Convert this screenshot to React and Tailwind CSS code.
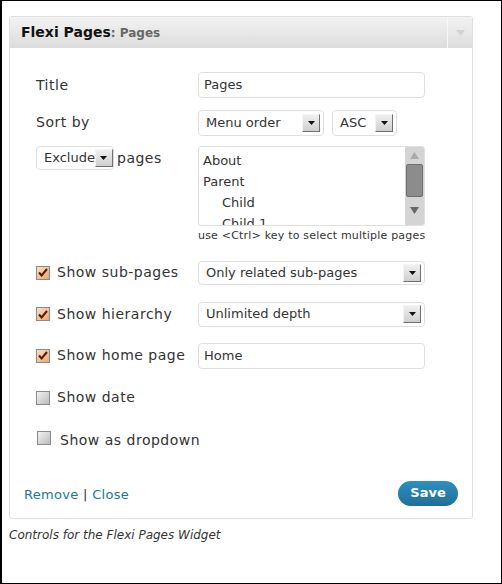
import React from "react"

const font = { fontFamily: '"DejaVu Sans", Verdana, sans-serif' }

function Arrow() {
  return (
    <span className="flex h-[18px] w-[18px] shrink-0 items-center justify-center border border-t-[#f4f4f4] border-l-[#f4f4f4] border-r-[#707070] border-b-[#707070] bg-gradient-to-b from-[#f0f0f0] to-[#cfcfcf]">
      <svg width="7" height="4" viewBox="0 0 7 4">
        <path d="M0 0h7L3.5 4z" fill="#111" />
      </svg>
    </span>
  )
}

function Select({ value, className = "" }) {
  return (
    <div className={`flex items-center justify-between rounded-[4px] border border-[#dfdfdf] bg-white pl-[7px] pr-[3px] text-[13px] text-[#333] ${className}`}>
      <span>{value}</span>
      <Arrow />
    </div>
  )
}

function Checkbox({ checked }) {
  return checked ? (
    <span className="flex h-[14px] w-[14px] shrink-0 items-center justify-center border border-[#8a8a8a] bg-gradient-to-br from-[#fbe0c6] to-[#e9a672]">
      <svg width="10" height="9" viewBox="0 0 10 9">
        <path d="M1 4.5l2.6 3L9 1" stroke="#5a1a05" strokeWidth="2" fill="none" />
      </svg>
    </span>
  ) : (
    <span className="block h-[14px] w-[14px] shrink-0 border border-[#8a8a8a] bg-gradient-to-br from-[#f2f2f2] to-[#bdbdbd]" />
  )
}

export default function App() {
  const pages = [
    { name: "About", indent: false },
    { name: "Parent", indent: false },
    { name: "Child", indent: true },
    { name: "Child 1", indent: true },
  ]

  return (
    <div className="h-[584px] w-[502px] overflow-hidden border border-l-2 border-black bg-white" style={font}>
      <div className="ml-[7px] mt-[15px] w-[464px] rounded-[3px] border border-[#dfdfdf] bg-white">
        {/* header */}
        <div className="flex h-[31px] items-center bg-gradient-to-b from-[#f3f3f3] to-[#dcdcdc]">
          <div className="flex-1 pl-[11px] text-[14px] font-bold text-[#111]">
            Flexi Pages<span className="text-[12px] text-[#666]">: Pages</span>
          </div>
          <div className="flex h-full w-[25px] items-center justify-center border-l border-[#f7f7f7]">
            <svg width="9" height="6" viewBox="0 0 9 6">
              <path d="M0 0h9L4.5 6z" fill="#d2d2d2" />
            </svg>
          </div>
        </div>

        {/* body */}
        <div className="pl-[26px] pr-[46px] pt-[24px] text-[14px] tracking-[0.5px] text-[#333]">
          <div className="grid grid-cols-[162px_227px] items-center">
            <span>Title</span>
            <div className="flex h-[26px] items-center rounded-[4px] border border-[#dfdfdf] pl-[5px] text-[13px] tracking-normal">Pages</div>
          </div>

          <div className="mt-[12px] grid grid-cols-[162px_227px] items-center tracking-normal">
            <span className="-mt-[2px] text-[14px] tracking-[0.5px]">Sort by</span>
            <div className="flex gap-[8px]">
              <Select value="Menu order" className="h-[26px] w-[126px]" />
              <Select value="ASC" className="h-[26px] w-[65px]" />
            </div>
          </div>

          <div className="mt-[10px] grid grid-cols-[162px_227px] items-start">
            <div className="flex items-center gap-[3px]">
              <Select value="Exclude" className="h-[24px] w-[78px] pl-[7px] pr-[1px] tracking-normal" />
              <span>pages</span>
            </div>
            <div className="tracking-normal">
              <div className="flex h-[80px] overflow-hidden rounded-[3px] border border-[#dfdfdf]">
                <div className="flex-1 pl-[4px] pt-[3px] text-[13px] leading-[21px]">
                  {pages.map((p) => (
                    <div key={p.name} className={p.indent ? "pl-[19px]" : ""}>{p.name}</div>
                  ))}
                </div>
                <div className="flex w-[19px] flex-col items-center bg-[#d4d4d4]">
                  <svg className="mt-[5px]" width="9" height="7" viewBox="0 0 9 7">
                    <path d="M4.5 0L9 7H0z" fill="#ababab" />
                  </svg>
                  <div className="mt-[5px] h-[33px] w-[17px] rounded-[2px] border border-[#6f6f6f] bg-[#8c8c8c]" />
                  <svg className="mt-[10px]" width="9" height="7" viewBox="0 0 9 7">
                    <path d="M0 0h9L4.5 7z" fill="#666" />
                  </svg>
                </div>
              </div>
              <div className="mt-[2px] whitespace-nowrap text-[11px] tracking-[0.2px] text-[#333]">use &lt;Ctrl&gt; key to select multiple pages</div>
            </div>
          </div>

          <div className="mt-[16px] grid grid-cols-[162px_227px] items-center">
            <label className="flex items-center gap-[7px]"><Checkbox checked /><span>Show sub-pages</span></label>
            <Select value="Only related sub-pages" className="h-[24px] tracking-normal" />
          </div>

          <div className="mt-[17px] grid grid-cols-[162px_227px] items-center">
            <label className="flex items-center gap-[7px]"><Checkbox checked /><span>Show hierarchy</span></label>
            <Select value="Unlimited depth" className="h-[25px] tracking-normal" />
          </div>

          <div className="mt-[16px] grid grid-cols-[162px_227px] items-center">
            <label className="flex items-center gap-[7px]"><Checkbox checked /><span>Show home page</span></label>
            <div className="flex h-[26px] items-center rounded-[4px] border border-[#dfdfdf] pl-[5px] text-[13px] tracking-normal">Home</div>
          </div>

          <label className="mt-[21px] flex h-[16px] items-center gap-[7px]"><Checkbox /><span>Show date</span></label>

          <label className="mt-[27px] flex h-[16px] items-center gap-[9px]">
            <span className="-mt-[6px] ml-[1px] block"><Checkbox /></span>
            <span>Show as dropdown</span>
          </label>
        </div>

        {/* footer */}
        <div className="flex items-center justify-between pl-[14px] pr-[14px] pb-[12px] pt-[32px]">
          <div className="mt-[4px] text-[13px] tracking-[0.3px] text-[#21759b]">
            <span>Remove</span> <span className="text-[#333]">|</span> <span>Close</span>
          </div>
          <button className="h-[25px] w-[60px] rounded-full bg-gradient-to-b from-[#2e8fc0] to-[#1f6f97] text-[13px] font-bold text-white">
            Save
          </button>
        </div>
      </div>

      <div className="ml-[7px] mt-[7px] text-[12px] italic text-[#333]">Controls for the Flexi Pages Widget</div>
    </div>
  )
}
